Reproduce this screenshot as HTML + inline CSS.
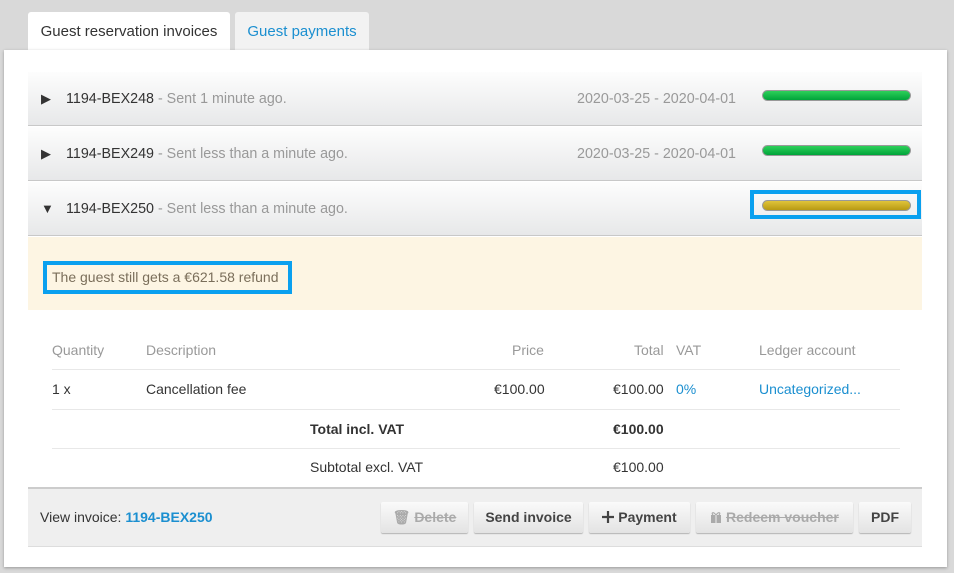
<!DOCTYPE html>
<html><head><meta charset="utf-8"><style>
*{box-sizing:border-box;margin:0;padding:0}
body{width:954px;height:573px;background:#d9d9d9;font-family:"Liberation Sans",sans-serif;font-size:14px;color:#333;position:relative;overflow:hidden}
.a{position:absolute}
.tab{top:12px;height:39px;border-radius:3px 3px 0 0;font-size:15px;line-height:40px;text-align:center}
.panel{left:4px;top:50px;width:943px;height:517px;background:#fff;box-shadow:0 1px 3px rgba(0,0,0,.3)}
.row{left:28px;width:894px;height:54px;background:linear-gradient(#fdfdfd,#e7e8e9);border-bottom:1px solid #c8c8c8;line-height:54px;font-size:14.3px}
.row .t{position:absolute;left:13px;font-size:13px;color:#333}
.row .n{position:absolute;left:38px;color:#333}
.row .n span{color:#999}
.row .d{position:absolute;right:186px;color:#999}
.bar{position:absolute;left:734px;top:18px;width:149px;height:11px;border-radius:6px;border:1px solid #999}
.g{background:linear-gradient(#2ed05a,#00a43a)}
.y{background:linear-gradient(#e0c43a,#b89a14)}
.line{left:52px;width:848px;height:1px;background:#e8e8e8}
.c{position:absolute;font-size:14px}
.btn{top:502px;height:31px;background:linear-gradient(#fafafa,#e3e3e3);border-radius:2px;box-shadow:0 1px 1px rgba(0,0,0,.25);font-weight:bold;font-size:14px;line-height:31px;text-align:center;color:#444}
.dis{color:#aaa;text-decoration:line-through}
</style></head><body>
<div class="a tab" style="left:28px;width:202px;background:#fff;color:#333">Guest reservation invoices</div>
<div class="a tab" style="left:235px;width:134px;background:#f2f2f2;color:#1b8fd0">Guest payments</div>
<div class="a panel"></div>

<div class="a row" style="top:72px"><span class="t">▶</span><span class="n">1194-BEX248 <span>- Sent 1 minute ago.</span></span><span class="d">2020-03-25 - 2020-04-01</span><div class="bar g"></div></div>
<div class="a row" style="top:127px"><span class="t">▶</span><span class="n">1194-BEX249 <span>- Sent less than a minute ago.</span></span><span class="d">2020-03-25 - 2020-04-01</span><div class="bar g"></div></div>
<div class="a row" style="top:182px"><span class="t">▼</span><span class="n">1194-BEX250 <span>- Sent less than a minute ago.</span></span><div class="bar y"></div></div>
<div class="a" style="left:750px;top:190px;width:171px;height:29px;border:4px solid #0aa0ef"></div>

<div class="a" style="left:28px;top:237px;width:894px;height:73px;background:#fdf5e3"></div>
<div class="a" style="left:43px;top:261px;width:249px;height:33px;border:4px solid #0aa0ef;color:#7a6e5a;line-height:25px;padding-left:5px;font-size:14px">The guest still gets a €621.58 refund</div>

<div class="c" style="left:52px;top:342px;color:#999">Quantity</div>
<div class="c" style="left:146px;top:342px;color:#999">Description</div>
<div class="c" style="left:512px;top:342px;color:#999">Price</div>
<div class="c" style="left:634px;top:342px;color:#999">Total</div>
<div class="c" style="left:676px;top:342px;color:#999">VAT</div>
<div class="c" style="left:759px;top:342px;color:#999">Ledger account</div>
<div class="a line" style="top:369px"></div>
<div class="c" style="left:52px;top:381px">1 x</div>
<div class="c" style="left:146px;top:381px">Cancellation fee</div>
<div class="c" style="left:494px;top:381px">€100.00</div>
<div class="c" style="left:613px;top:381px">€100.00</div>
<div class="c" style="left:676px;top:381px;color:#1b8fd0">0%</div>
<div class="c" style="left:759px;top:381px;color:#1b8fd0">Uncategorized...</div>
<div class="a line" style="top:409px"></div>
<div class="c" style="left:310px;top:421px;font-weight:bold">Total incl. VAT</div>
<div class="c" style="left:613px;top:421px;font-weight:bold">€100.00</div>
<div class="a line" style="top:448px"></div>
<div class="c" style="left:310px;top:459px">Subtotal excl. VAT</div>
<div class="c" style="left:613px;top:459px">€100.00</div>

<div class="a" style="left:28px;top:487px;width:894px;height:60px;background:#efefef;border-top:2px solid #ccc;border-bottom:1px solid #ddd"></div>
<div class="c" style="left:40px;top:509px">View invoice: <b style="color:#1b8fd0">1194-BEX250</b></div>
<div class="a btn" style="left:381px;width:87px"><span style="color:#aaa">🗑︎</span> <span class="dis">Delete</span></div>
<div class="a btn" style="left:474px;width:109px">Send invoice</div>
<div class="a btn" style="left:589px;width:101px"><svg width="12" height="12" viewBox="0 0 12 12" style="vertical-align:-1px"><path d="M6 0v12M0 6h12" stroke="#444" stroke-width="2.2"/></svg> Payment</div>
<div class="a btn" style="left:696px;width:157px"><svg width="12" height="12" viewBox="0 0 12 12" style="vertical-align:-1px"><rect x="1" y="4" width="10" height="8" fill="#aaa"/><path d="M3 4c-2-2 0-4 3 0c3-4 5-2 3 0" fill="none" stroke="#aaa" stroke-width="1.2"/><path d="M6 4v8" stroke="#eee" stroke-width="1"/></svg> <span class="dis">Redeem voucher</span></div>
<div class="a btn" style="left:859px;width:52px">PDF</div>
</body></html>
